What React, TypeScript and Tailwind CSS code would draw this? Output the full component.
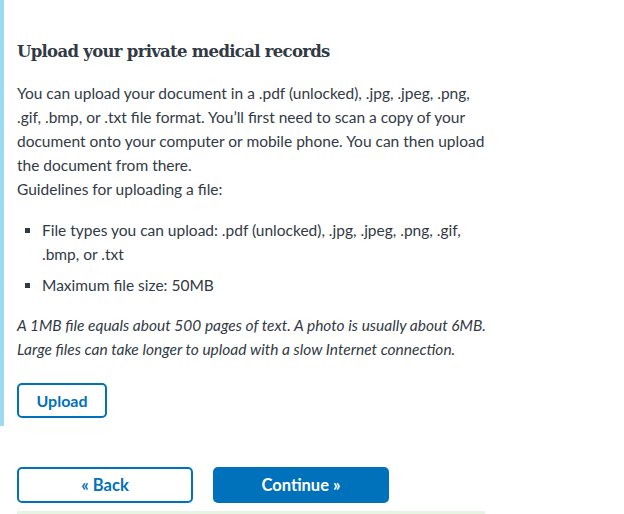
import React from "react";

const body = { fontFamily: "Lato, 'Noto Sans', sans-serif" } as React.CSSProperties;

export default function App() {
  return (
    <div className="w-[624px] h-[514px] overflow-hidden bg-white text-[#323a45]" style={body}>
      <div className="border-l-4 border-[#9bdaf1] pl-[13px] pt-[39px] pb-[8px]">
        <h2 className="text-[16.5px] leading-[26px] font-bold tracking-[-0.7px]" style={{ fontFamily: "'DejaVu Serif', serif" }}>
          Upload your private medical records
        </h2>
        <p className="mt-[16px] text-[15.5px] leading-[24px]">
          You can upload your document in a .pdf (unlocked), .jpg, .jpeg, .png,
          <br />
          .gif, .bmp, or .txt file format. You’ll first need to scan a copy of your
          <br />
          document onto your computer or mobile phone. You can then upload
          <br />
          the document from there.
          <br />
          Guidelines for uploading a file:
        </p>
        <ul className="mt-[17px] text-[15.5px] leading-[24px] flex flex-col gap-[7px]">
          <li className="flex">
            <span className="w-[8px] shrink-0 pt-[10px] pl-[8px] box-content">
              <span className="block w-[5px] h-[5px] bg-[#323a45]" />
            </span>
            <span className="pl-[9px]">
              File types you can upload: .pdf (unlocked), .jpg, .jpeg, .png, .gif,
              <br />
              .bmp, or .txt
            </span>
          </li>
          <li className="flex">
            <span className="w-[8px] shrink-0 pt-[10px] pl-[8px] box-content">
              <span className="block w-[5px] h-[5px] bg-[#323a45]" />
            </span>
            <span className="pl-[9px]">Maximum file size: 50MB</span>
          </li>
        </ul>
        <p className="mt-[16px] text-[15.5px] leading-[24px] italic">
          A 1MB file equals about 500 pages of text. A photo is usually about 6MB.
          <br />
          Large files can take longer to upload with a slow Internet connection.
        </p>
        <button className="mt-[22px] w-[90px] h-[35px] rounded-[5px] border-2 border-[#0071bb] text-[#0071bb] text-[16px] font-bold flex items-center justify-center">
          Upload
        </button>
      </div>
      <div className="ml-[17px] w-[468px] mt-[41px]">
        <div className="flex gap-[20px]">
          <button className="w-[176px] h-[36px] rounded-[5px] border-2 border-[#0071bb] text-[#0071bb] text-[16.5px] font-bold flex items-center justify-center">
            « Back
          </button>
          <button className="w-[176px] h-[36px] rounded-[5px] bg-[#0071bb] text-white text-[16.5px] font-bold flex items-center justify-center">
            Continue »
          </button>
        </div>
        <div className="mt-[8px] h-[10px] bg-[#e7f4e4]" />
      </div>
    </div>
  );
}
